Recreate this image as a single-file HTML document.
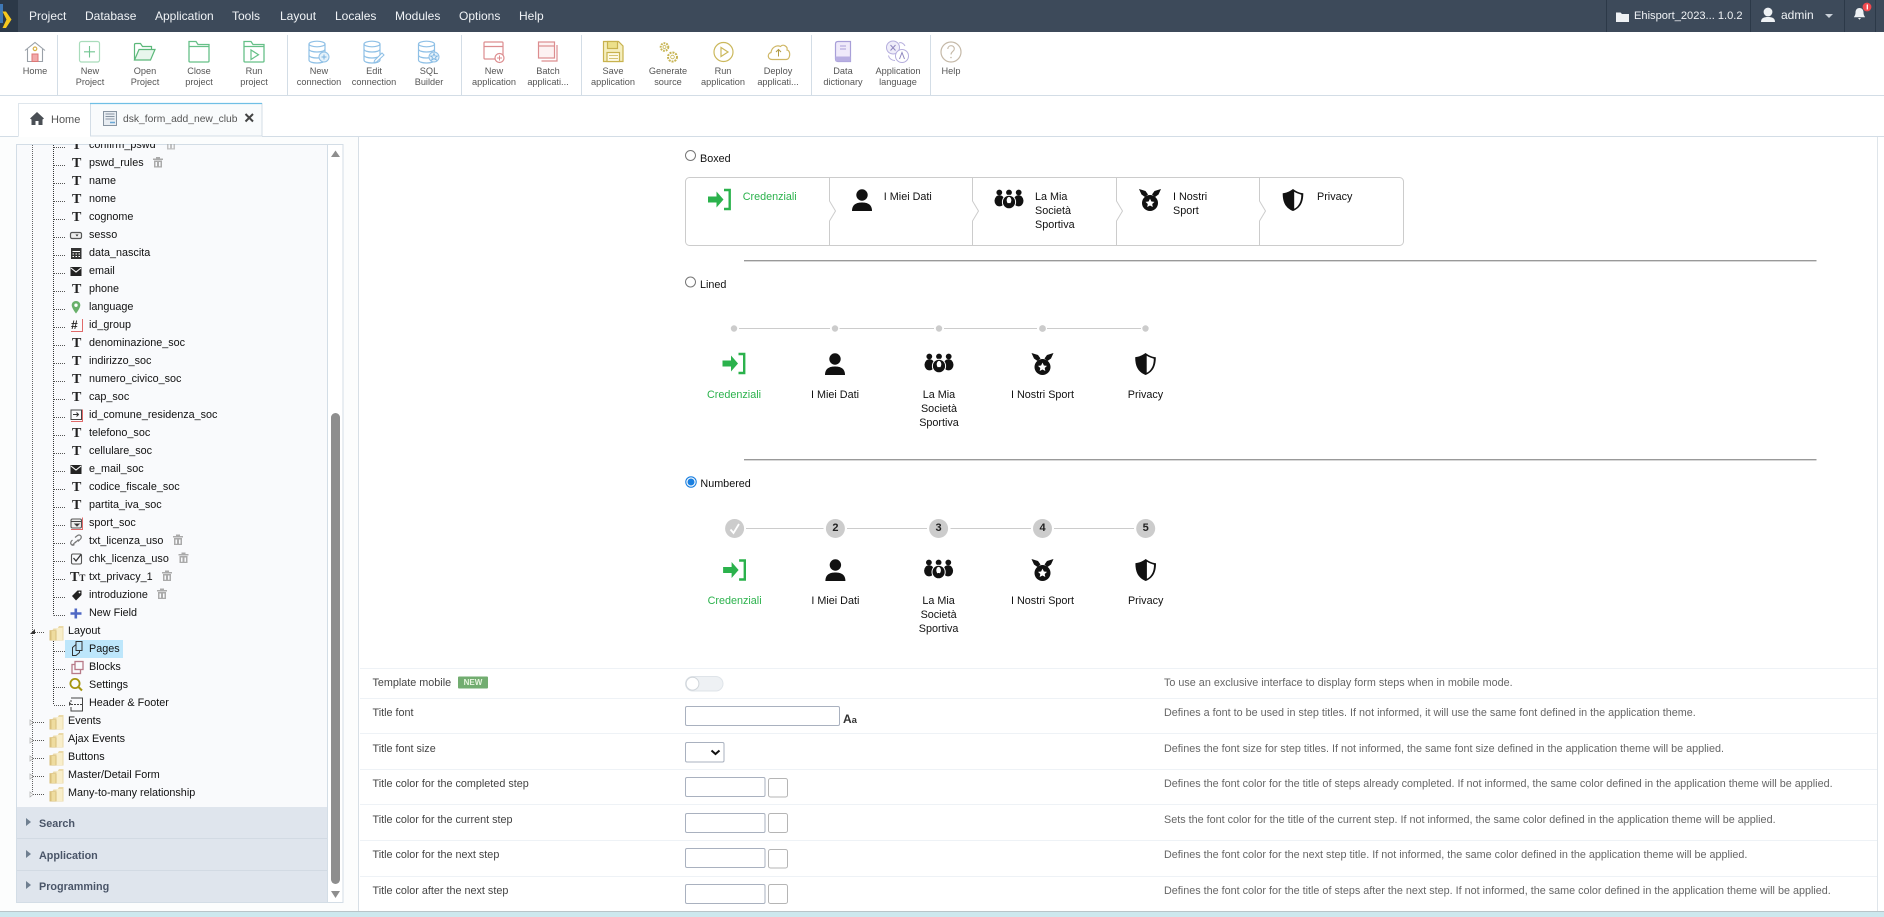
<!DOCTYPE html>
<html><head><meta charset="utf-8"><title>Scriptcase</title>
<style>
html,body{margin:0;padding:0;background:#fff;width:1884px;height:917px;overflow:hidden}
body{position:relative;font-family:"Liberation Sans",sans-serif}
#g{position:absolute;left:0;top:0}
.t,.m,.b,.r,.l,.f,.d,.c,.s{position:absolute;white-space:nowrap}
.m{top:9px;font-size:12px;line-height:14px;color:#f0f3f6}
.b{top:66px;width:70px;text-align:center;font-size:9.2px;line-height:11.4px;color:#555}
.r{left:89px;font-size:10.8px;line-height:14px;color:#111}
.f{left:68px;font-size:10.8px;line-height:14px;color:#111}
.l{left:372.5px;font-size:10.8px;line-height:14px;color:#444}
.d{left:1164px;font-size:10.8px;line-height:14px;color:#666}
.s{font-size:10.8px;line-height:14px;color:#111}
.c{width:90px;text-align:center;font-size:10.8px;line-height:14px;color:#111}
.gr{color:#2bb24c}
.acc{position:absolute;left:39px;font-size:10.8px;line-height:14px;font-weight:bold;color:#4a5568}
.T{position:absolute;left:72px;font:bold 14px/14px "Liberation Serif",serif;color:#222}
.n{position:absolute;top:521px;width:20px;text-align:center;font:bold 11px/14px "Liberation Sans",sans-serif;color:#222}
</style></head><body>
<div style="position:absolute;left:0;top:0;width:1884px;height:32px;background:#3d4a5a"></div>
<div style="position:absolute;left:0;top:0;width:18px;height:32px;background:#2c3948"></div>
<div style="position:absolute;left:0;top:137px;width:358px;height:775px;background:#fcfdfd"></div>
<div style="position:absolute;left:16px;top:144px;width:312px;height:758px;background:#f9fafc"></div>
<div style="position:absolute;left:65px;top:640px;width:58px;height:18px;background:#bde6fb"></div>
<div style="position:absolute;left:16px;top:807px;width:312px;height:95px;background:#dfe5ed"></div>
<div style="position:absolute;left:0;top:912px;width:1884px;height:5px;background:#cde8ee"></div>

<svg id="g" width="1884" height="917" viewBox="0 0 1884 917" xmlns="http://www.w3.org/2000/svg">
<defs>
<g id="login"><path d="M-11.5-3H-3V-8L4 0-3 8V3H-11.5Z" fill="#2bb24c"/><path d="M4.5-9.5H10.2V9.5H4.5" fill="none" stroke="#2bb24c" stroke-width="2.4"/></g>
<g id="person" fill="#111"><circle cy="-5" r="5.7"/><path d="M-10 11C-10 4-5 2.5 0 2.5S10 4 10 11Z"/></g>
<g id="group" fill="#111"><circle cx="-9.7" cy="-7.5" r="2.9"/><circle cy="-7.5" r="2.9"/><circle cx="9.7" cy="-7.5" r="2.9"/><ellipse cx="-9.5" cy="0.8" rx="5" ry="5.6"/><ellipse cx="9.5" cy="0.8" rx="5" ry="5.6"/><ellipse cy="2" rx="6.6" ry="6.8" stroke="#fff" stroke-width="1"/><ellipse cy="0.3" rx="2.3" ry="3.4" fill="#fff"/><path d="M-0.8 3H0.8V7H-0.8Z"/></g>
<g id="medal"><path d="M-11-11L-4.5-9-2-5.5-5-3-8.5-5.5ZM11-11L4.5-9 2-5.5 5-3 8.5-5.5Z" fill="#111"/><circle cy="3" r="8" fill="#111"/><path d="M0-1.4L1.4 1.5 4.5 1.9 2.2 4 2.8 7 0 5.5-2.8 7-2.2 4-4.5 1.9-1.4 1.5Z" fill="#fff"/></g>
<g id="shield"><path d="M0-11C4-8 7.5-7 10.3-6.8 10.3 3 7 8 0 11-7 8-10.3 3-10.3-6.8-7.5-7-4-8 0-11Z" fill="#111"/><path d="M1.2-8.2C3.5-6.8 6-5.8 8.3-5.3 8.3 2 5.5 6.5 1.2 8.8Z" fill="#fff"/></g>
<g id="trash" fill="#aaa"><rect x="0" y="1.5" width="10" height="1.5"/><rect x="3" y="0" width="4" height="1.6"/><path d="M1 3.5H9V10.5H1ZM2.5 5V9.2H4V5ZM6 5V9.2H7.5V5Z" fill-rule="evenodd"/></g>
<g id="folder"><path d="M1 5H4L5 3.5H9L10.5 1H15V15.5H1Z" fill="#ead9a8"/><path d="M8 3H14V15H8Z" fill="#f8eecb"/><path d="M1 5.5H8V15.5H1Z" fill="#d9c07c"/><path d="M3 6H7V15H3Z" fill="#eedc9f"/></g>
<g id="db" fill="none" stroke-width="1.2"><ellipse cx="0" cy="-8" rx="8" ry="2.8"/><path d="M-8-8V8C-8 10-4 11 0 11S8 10 8 8V-8M-8-3C-8-1-4 0 0 0S8-1 8-3M-8 3C-8 5-4 6 0 6S8 5 8 3"/></g>
<g id="fld" fill="none"><path d="M-10-10H-3L-1-7H10V9.5Q10 10.5 9 10.5H-9Q-10 10.5-10 9.5Z"/><path d="M-10-5H10"/></g>
</defs>

<!-- logo -->
<path d="M0 4H3V23H0Z" fill="#3f78b5"/>
<path d="M2.5 11.5L6 11.5 11.5 19.5 6 28 2.5 28 6.5 19.5Z" fill="#f6c81e"/>

<!-- topbar right -->
<g stroke="#2c3948" stroke-width="1"><path d="M1606.5 0V32M1750.5 0V32M1844.5 0V32M1875.5 0V32"/></g>
<path d="M1616 12.5h4.5l1.5 1.5h7v8h-13Z" fill="#eef1f4"/>
<g fill="#eef1f4"><circle cx="1768" cy="12" r="4.4"/><path d="M1761 22c0-4 3-5 7-5s7 1 7 5Z"/><path d="M1825 14h8l-4 4Z" fill="#c9d0d8"/><path d="M1859.5 8c2.7 0 4 2 4 4.5 0 2.5 1 3.5 1.6 4.7h-11.2c.6-1.2 1.6-2.2 1.6-4.7 0-2.5 1.3-4.5 4-4.5ZM1858 18h3l-1.5 1.8Z"/></g>
<circle cx="1867" cy="7" r="4.4" fill="#f0484e"/><path d="M1867.3 4.5V9.5" stroke="#fff" stroke-width="1.3"/>

<!-- toolbar -->
<path d="M0 95.5H1884M0 136.5H18.5M262 136.5H1884" stroke="#d3dde6"/>
<path d="M57.5 35V95M287.5 35V95M461.5 35V95M581.5 35V95M811.5 35V95M930.5 35V95" stroke="#d3dde6"/>
<!-- home -->
<g fill="none" stroke="#9aa1a8" stroke-width="1.1"><path d="M25 50.5L35 42.5 45 50.5"/><path d="M27.5 49V61.5H42.5V49"/></g><rect x="32" y="54" width="6" height="7.5" fill="#f2a9a9" stroke="#d77"/><circle cx="35" cy="48.8" r="1.8" fill="none" stroke="#d8b24a" stroke-width="1.2"/>
<!-- new project -->
<rect x="79.5" y="41.5" width="20" height="20.5" rx="2" fill="none" stroke="#a9dcbb" stroke-width="1.2"/><path d="M89.5 46V57.5M84 51.8H95" stroke="#72c592" stroke-width="1.1"/>
<!-- open -->
<g fill="none" stroke="#5cb87a" stroke-width="1.2"><path d="M134.5 60V44.5Q134.5 43.5 136 43.5H140.5L142.5 46.5H151.5V49.5"/><path d="M134.5 60H150.5L155 49.5H139Z" fill="#e8f6ed"/></g>
<!-- close -->
<use href="#fld" x="199" y="51.5" stroke="#66c088" stroke-width="1.3"/>
<use href="#fld" x="254" y="51.5" stroke="#66c088" stroke-width="1.3"/><path d="M251 50V59.5L258.5 54.7Z" fill="none" stroke="#66c088" stroke-width="1.2"/>
<!-- dbs -->
<use href="#db" x="317" y="52" stroke="#8fc0e6"/><circle cx="324" cy="57" r="5" fill="#e4f1fa" stroke="#8fc0e6"/><path d="M324 54.5V59.5M321.5 57H326.5" stroke="#7ab3e0"/>
<use href="#db" x="372" y="52" stroke="#8fc0e6"/><path d="M374.5 60.5L382 53 384 55 376.5 62 374 62.5Z" fill="#fff" stroke="#8fc0e6"/>
<use href="#db" x="426.5" y="52" stroke="#8fc0e6"/><circle cx="434" cy="57" r="5" fill="#e4f1fa" stroke="#8fc0e6"/><path d="M434 53.5L435 56H437.5L435.5 57.5 436.3 60 434 58.5 431.7 60 432.5 57.5 430.5 56H433Z" fill="none" stroke="#7ab3e0" stroke-width=".8"/>
<!-- applications -->
<g fill="none" stroke="#dc8d8f" stroke-width="1.2"><rect x="484" y="42" width="19" height="17" rx="1"/><path d="M484 46.5H503"/><circle cx="499.5" cy="58" r="4.5" fill="#fff"/><path d="M499.5 55.5V60.5M497 58H502" stroke-width="1"/>
<rect x="538.5" y="42" width="16" height="16" fill="#fdf2f2"/><path d="M538.5 46H554.5"/><path d="M557 45V61H541.5"/></g>
<!-- save -->
<g fill="none" stroke="#c8b24e" stroke-width="1.2"><path d="M603.5 41.5H618.5L623 46V61.5H603.5Z" fill="#f5eebd"/><rect x="607.5" y="41.5" width="10" height="7" fill="#ece08a"/><rect x="607" y="52.5" width="12.5" height="9" fill="#fdfae6"/><path d="M609 55.5H618M609 58.5H618" stroke-width=".8"/></g>
<!-- gears -->
<g fill="none" stroke="#c7b453"><circle cx="664.5" cy="47" r="3.8" stroke-width="2" stroke-dasharray="1.8 1"/><circle cx="664.5" cy="47" r="1.5" stroke-width=".8"/><circle cx="672.5" cy="57" r="4.5" stroke-width="2" stroke-dasharray="2 1"/><circle cx="672.5" cy="57" r="1.8" stroke-width=".8"/></g>
<!-- run app -->
<circle cx="723.5" cy="52" r="9.5" fill="none" stroke="#cbb85c" stroke-width="1.2"/><path d="M721 47.5V56.5L728 52Z" fill="none" stroke="#cbb85c" stroke-width="1.2"/>
<!-- deploy -->
<path d="M772 59.5C767.5 59.5 767 53.5 771 52.5 771.5 48 776 44.5 780.5 46.5 783 43.5 788 46.5 787 50 791 50.5 790.5 59.5 786 59.5Z" fill="none" stroke="#cfb765" stroke-width="1.2"/><path d="M778.5 56.5V49.5M776 52L778.5 49.5 781 52" fill="none" stroke="#b19a44"/>
<!-- data dictionary -->
<path d="M835.5 44Q835.5 41.5 838 41.5H850.5V61.5H838Q835.5 61.5 835.5 59Z" fill="#efeafa" stroke="#a89fd8" stroke-width="1.2"/><rect x="835.5" y="56.5" width="15" height="5" fill="#b8afe2"/><path d="M840 46H846M840 49H846" stroke="#a89fd8"/>
<!-- language -->
<g fill="none" stroke="#b5aedd"><circle cx="893" cy="47.5" r="6.5" fill="#efedf9"/><circle cx="902" cy="56" r="6.5" fill="#fff"/><path d="M899 43C901 42 904 43.5 905 46M888.5 55.5C889 58.5 892 60.5 895 60.5"/></g><path d="M890.5 45L895.5 50.5M895.5 45L890.5 50.5M899.5 59L902 52.5 904.5 59" fill="none" stroke="#8f87bf"/>
<!-- help -->
<circle cx="951" cy="52" r="10" fill="none" stroke="#c5b9a8" stroke-width="1.2"/><path d="M947.8 49C948 44.5 954.5 44.7 954.3 49 954.2 51.5 951 51.5 951 54.5" fill="none" stroke="#c5b9a8" stroke-width="1.1"/><circle cx="951" cy="57.5" r=".8" fill="#c5b9a8"/>

<!-- tabs -->
<path d="M18.5 136V103.5H90" fill="none" stroke="#dfe6ec"/>
<rect x="90.5" y="103.5" width="171.5" height="32.5" fill="#f9fbfc" stroke="#d3dde6"/><path d="M90 103.5H262" stroke="#6fbfe5" stroke-width="1.2"/>
<path d="M30 118.5L37 112 44 118.5 42.5 119.5V125H38.5V121H35.5V125H31.5V119.5Z" fill="#4a4f55"/>
<rect x="103.5" y="111.5" width="13" height="14" fill="#e8edf2" stroke="#8794a1"/><path d="M105.5 114H114.5M105.5 116.5H114.5M105.5 119H114.5" stroke="#8794a1"/><path d="M110 122.5H115" stroke="#6aa8d6" stroke-width="1.5"/>
<path d="M245.5 114L253 121.5M253 114L245.5 121.5" stroke="#444" stroke-width="2"/>

<!-- left panel borders -->
<path d="M358.5 137V912" stroke="#d7dfe6"/>
<rect x="16.5" y="144.5" width="326.5" height="758" fill="none" stroke="#d3dde6"/>
<path d="M327.5 145V902" stroke="#d3dde6"/>
<path d="M1877.5 137V912" stroke="#dfe5ea"/>
<path d="M0 911.5H1884" stroke="#b9c4c8"/>
<!-- scrollbar -->
<rect x="328" y="145" width="14.5" height="757" fill="#fff"/>
<rect x="331" y="413" width="9" height="471" rx="4.5" fill="#8e8e8e"/>
<path d="M331 157H340L335.5 150.5ZM331 891H340L335.5 898Z" fill="#8e8e8e"/>
<!-- tree lines -->
<g stroke="#333" stroke-width="1" stroke-dasharray="1 1"><path d="M32.5 145V793" opacity=".75"/><path d="M53.5 145V615.5M53.5 633V705"/></g>
<g stroke="#555" stroke-dasharray="1 1"><path d="M54 147.5H66M54 165.5H66M54 183.5H66M54 201.5H66M54 219.5H66M54 237.5H66M54 255.5H66M54 273.5H66M54 291.5H66M54 309.5H66M54 327.5H66M54 345.5H66M54 363.5H66M54 381.5H66M54 399.5H66M54 417.5H66M54 435.5H66M54 453.5H66M54 471.5H66M54 489.5H66M54 507.5H66M54 525.5H66M54 543.5H66M54 561.5H66M54 579.5H66M54 597.5H66M54 615.5H66M54 651.5H66M54 669.5H66M54 687.5H66M54 705.5H66M33 632.5H44M33 722.5H44M33 740.5H44M33 758.5H44M33 776.5H44M33 794.5H44"/></g>
<path d="M30 634L35 634 35 629Z" fill="#333"/>
<g fill="#fff" stroke="#aaa" stroke-width=".7"><path d="M30 720V725L33 722.5ZM30 738V743L33 740.5ZM30 756V761L33 758.5ZM30 774V779L33 776.5ZM30 792V797L33 794.5Z"/></g>
<!-- folders -->
<use href="#folder" x="48.5" y="625"/><use href="#folder" x="48.5" y="714"/><use href="#folder" x="48.5" y="732"/><use href="#folder" x="48.5" y="750"/><use href="#folder" x="48.5" y="768"/><use href="#folder" x="48.5" y="786"/>
<!-- field icons -->
<use href="#trash" x="166" y="139" opacity=".7"/>
<use href="#trash" x="153" y="157"/><use href="#trash" x="173" y="534.5"/><use href="#trash" x="178.5" y="552.5"/><use href="#trash" x="162" y="570.5"/><use href="#trash" x="157" y="588.5"/>
<rect x="70.5" y="232.5" width="11" height="6" rx="1.5" fill="#eee" stroke="#555" stroke-width="1.2"/><path d="M75.5 234.5L77 236.5 78.5 234.5Z" fill="#333"/>
<path d="M71 248H81.5V259H71Z" fill="#333"/><path d="M72.5 251.5H80M72.5 254H74M75.5 254H77M78.5 254H80M72.5 256.5H74M75.5 256.5H77M78.5 256.5H80" stroke="#fff"/>
<path d="M70.5 267H81.5V276H70.5Z" fill="#222"/><path d="M71 268L76 272 81 268" fill="none" stroke="#fff" stroke-width="1.1"/>
<path d="M76 301C73 301 71.7 303.3 71.7 305.2 71.7 308 76 313.5 76 313.5S80.3 308 80.3 305.2C80.3 303.3 79 301 76 301Z" fill="#68b06a"/><circle cx="76" cy="305.2" r="1.7" fill="#fff"/>
<path d="M71 331.5H82.5V319" fill="none" stroke="#e06a6a"/>
<rect x="71" y="410" width="10.5" height="9.5" fill="none" stroke="#444"/><path d="M73 414.5H78M76.5 412.5L78.5 414.5 76.5 416.5" fill="none" stroke="#333"/><path d="M71 421.5H82.5V409.5" fill="none" stroke="#e06a6a"/>
<path d="M70.5 465H81.5V474H70.5Z" fill="#222"/><path d="M71 466L76 470 81 466" fill="none" stroke="#fff" stroke-width="1.1"/>
<rect x="71" y="519" width="10.5" height="9" rx="1.5" fill="#eee" stroke="#555" stroke-width="1.1"/><path d="M71 521.5H81.5M75 524L77 526 79 524Z" stroke="#444"/><path d="M71 529.5H82.5V517.5" fill="none" stroke="#e06a6a"/>
<g fill="none" stroke="#777" stroke-width="1.2"><path d="M72.5 545L76 541.5M75 537.5L77.5 535.5C80 534 82.5 536.5 80.5 539L78 541.5M78.5 539.5L75 543M72.5 540L71.5 541C69.5 543.5 72 546.5 74.5 544.5"/></g>
<rect x="71.5" y="554" width="10" height="10" rx="1.5" fill="none" stroke="#555" stroke-width="1.1"/><path d="M73.5 558L76 561 81 554.5" fill="none" stroke="#333" stroke-width="1.3"/>
<path d="M72 596L77.5 590.5H81.5V595L76 600.5Z" fill="#222"/><circle cx="79.5" cy="592.5" r=".9" fill="#fff"/>
<path d="M75.8 608.5V618.5M70.5 613.5H81.5" stroke="#4f68c4" stroke-width="2.6"/>
<g fill="none" stroke="#333" stroke-width="1"><path d="M72.5 647.5L76 644.5H79.5V652.5L76 655.5H72.5Z"/><rect x="76" y="641.5" width="6" height="9" fill="#bde6fb"/></g>
<g fill="none" stroke="#b77a88" stroke-width="1.3"><rect x="72" y="664.5" width="8.5" height="9"/><rect x="75" y="661.5" width="8" height="8" fill="#f9fafc"/></g>
<circle cx="75" cy="683.5" r="4.6" fill="none" stroke="#a5950f" stroke-width="1.8"/><path d="M78.5 687L82 690.5" stroke="#a5950f" stroke-width="2"/>
<g fill="none" stroke="#444"><path d="M71 698H82.5V711H71V707M71 700V702"/><path d="M71 704.5H82.5" stroke-dasharray="2 1"/></g><path d="M69 701.5V706L71.5 704Z" fill="#444"/>
<!-- accordion -->
<path d="M17 838.5H327M17 870.5H327" stroke="#d2dae3"/>
<path d="M26 818V826L31 822ZM26 850V858L31 854ZM26 881V889L31 885Z" fill="#6f7f90"/>

<!-- radios -->
<circle cx="690.5" cy="155.5" r="5" fill="#fff" stroke="#777"/>
<circle cx="690.5" cy="282" r="5" fill="#fff" stroke="#777"/>
<circle cx="691" cy="482" r="5.2" fill="#fff" stroke="#1a7fe0" stroke-width="1.1"/><circle cx="691" cy="482" r="3.5" fill="#1a7fe0"/>

<!-- boxed -->
<rect x="685.5" y="177.5" width="718" height="68" rx="4" fill="none" stroke="#ccc"/>
<path d="M829.5 178V201L835.5 211 829.5 221V245M972.5 178V201L978.5 211 972.5 221V245M1116.5 178V201L1122.5 211 1116.5 221V245M1259.5 178V201L1265.5 211 1259.5 221V245" fill="none" stroke="#ccc"/>
<use href="#login" x="719.5" y="199.5"/><use href="#person" x="862" y="200"/><use href="#group" x="1009" y="200"/><use href="#medal" x="1150" y="200"/><use href="#shield" x="1293" y="200"/>
<!-- hr -->
<path d="M744 260.7H1816.5M744 459.7H1816.5" stroke="#999" stroke-width="1.3"/>
<!-- lined -->
<path d="M739 328.5H830M839.5 328.5H934M944 328.5H1037M1047 328.5H1141" stroke="#ccc"/>
<g fill="#ccc"><circle cx="734" cy="328.5" r="3.2"/><circle cx="835" cy="328.5" r="3.2"/><circle cx="939" cy="328.5" r="3.2"/><circle cx="1042.5" cy="328.5" r="3.4"/><circle cx="1145.5" cy="328.5" r="3.2"/></g>
<use href="#login" x="734" y="363.5"/><use href="#person" x="835" y="364"/><use href="#group" x="939" y="364"/><use href="#medal" x="1042.5" y="364"/><use href="#shield" x="1145.5" y="364"/>
<!-- numbered -->
<path d="M746 528.5H823.5M847 528.5H927M950.5 528.5H1031M1054 528.5H1134" stroke="#ccc"/>
<g fill="#ccc"><circle cx="734.6" cy="528.5" r="9.5"/><circle cx="835.4" cy="528.5" r="9.5"/><circle cx="938.6" cy="528.5" r="9.5"/><circle cx="1042.5" cy="528.5" r="9.5"/><circle cx="1145.7" cy="528.5" r="9.5"/></g>
<path d="M730.5 529.5L733.5 533 739 524" fill="none" stroke="#fff" stroke-width="1.8"/>
<use href="#login" x="734.6" y="570"/><use href="#person" x="835.4" y="570"/><use href="#group" x="938.6" y="570"/><use href="#medal" x="1042.5" y="570"/><use href="#shield" x="1145.7" y="570"/>

<!-- rows -->
<path d="M360 668.5H1877M360 698.5H1877M360 733.5H1877M360 769.5H1877M360 804.5H1877M360 840.5H1877M360 876.5H1877" stroke="#eef2f6"/>
<rect x="458" y="676.5" width="30" height="12" rx="1" fill="#72ad70"/>
<rect x="685.5" y="676.5" width="37.5" height="14.5" rx="7.2" fill="#eef1f4" stroke="#dfe4e9"/><circle cx="692.5" cy="683.7" r="6.4" fill="#fff" stroke="#d0d5da"/>
<g fill="#fff" stroke="#a9b1bf"><rect x="685.5" y="706.5" width="154" height="19" rx="1.5"/><rect x="685.5" y="742.5" width="38.5" height="19.5" rx="1.5"/>
<rect x="685.5" y="777.5" width="79.5" height="19" rx="1.5"/><rect x="685.5" y="813.5" width="79.5" height="19" rx="1.5"/><rect x="685.5" y="848.5" width="79.5" height="19" rx="1.5"/><rect x="685.5" y="884.5" width="79.5" height="19" rx="1.5"/>
<g stroke="#b5b5b5"><rect x="768.5" y="778.5" width="19" height="18.5" rx="2"/><rect x="768.5" y="813.5" width="19" height="19" rx="2"/><rect x="768.5" y="849.5" width="19" height="18.5" rx="2"/><rect x="768.5" y="884.5" width="19" height="19" rx="2"/></g></g>
<path d="M711.5 750.5L715.5 754 719.5 750.5" fill="none" stroke="#111" stroke-width="2"/>
</svg>

<div class="m" style="left:29px">Project</div><div class="m" style="left:85px">Database</div><div class="m" style="left:155px">Application</div><div class="m" style="left:232px">Tools</div><div class="m" style="left:280px">Layout</div><div class="m" style="left:335px">Locales</div><div class="m" style="left:395px">Modules</div><div class="m" style="left:459px">Options</div><div class="m" style="left:519px">Help</div>
<div class="m" style="left:1634px;font-size:11.1px">Ehisport_2023... 1.0.2</div><div class="m" style="left:1781px;top:8px">admin</div>

<div class="b" style="left:0">Home</div>
<div class="b" style="left:55px">New<br>Project</div><div class="b" style="left:110px">Open<br>Project</div><div class="b" style="left:164px">Close<br>project</div><div class="b" style="left:219px">Run<br>project</div>
<div class="b" style="left:284px">New<br>connection</div><div class="b" style="left:339px">Edit<br>connection</div><div class="b" style="left:394px">SQL<br>Builder</div>
<div class="b" style="left:459px">New<br>application</div><div class="b" style="left:513px">Batch<br>applicati...</div>
<div class="b" style="left:578px">Save<br>application</div><div class="b" style="left:633px">Generate<br>source</div><div class="b" style="left:688px">Run<br>application</div><div class="b" style="left:743px">Deploy<br>applicati...</div>
<div class="b" style="left:808px">Data<br>dictionary</div><div class="b" style="left:863px">Application<br>language</div><div class="b" style="left:916px">Help</div>

<div class="t" style="left:51px;top:113px;font-size:11px;line-height:14px;color:#555">Home</div>
<div class="t" style="left:123px;top:113px;font-size:10.3px;line-height:14px;color:#555">dsk_form_add_new_club</div>

<div class="r" style="top:138px">confirm_pswd</div><div class="r" style="top:156px">pswd_rules</div><div class="r" style="top:174px">name</div><div class="r" style="top:192px">nome</div><div class="r" style="top:210px">cognome</div><div class="r" style="top:228px">sesso</div><div class="r" style="top:246px">data_nascita</div><div class="r" style="top:264px">email</div><div class="r" style="top:282px">phone</div><div class="r" style="top:300px">language</div><div class="r" style="top:318px">id_group</div><div class="r" style="top:336px">denominazione_soc</div><div class="r" style="top:354px">indirizzo_soc</div><div class="r" style="top:372px">numero_civico_soc</div><div class="r" style="top:390px">cap_soc</div><div class="r" style="top:408px">id_comune_residenza_soc</div><div class="r" style="top:426px">telefono_soc</div><div class="r" style="top:444px">cellulare_soc</div><div class="r" style="top:462px">e_mail_soc</div><div class="r" style="top:480px">codice_fiscale_soc</div><div class="r" style="top:498px">partita_iva_soc</div><div class="r" style="top:516px">sport_soc</div><div class="r" style="top:534px">txt_licenza_uso</div><div class="r" style="top:552px">chk_licenza_uso</div><div class="r" style="top:570px">txt_privacy_1</div><div class="r" style="top:588px">introduzione</div><div class="r" style="top:606px">New Field</div>
<div class="f" style="top:624px">Layout</div><div class="r" style="top:642px">Pages</div><div class="r" style="top:660px">Blocks</div><div class="r" style="top:678px">Settings</div><div class="r" style="top:696px">Header &amp; Footer</div>
<div class="f" style="top:714px">Events</div><div class="f" style="top:732px">Ajax Events</div><div class="f" style="top:750px">Buttons</div><div class="f" style="top:768px">Master/Detail Form</div><div class="f" style="top:786px">Many-to-many relationship</div>

<div class="T" style="top:139px">T</div><div class="T" style="top:157px">T</div><div class="T" style="top:175px">T</div><div class="T" style="top:193px">T</div><div class="T" style="top:211px">T</div><div class="T" style="top:283px">T</div><div class="T" style="top:337px">T</div><div class="T" style="top:355px">T</div><div class="T" style="top:373px">T</div><div class="T" style="top:391px">T</div><div class="T" style="top:427px">T</div><div class="T" style="top:445px">T</div><div class="T" style="top:481px">T</div><div class="T" style="top:499px">T</div><div class="T" style="left:70px;top:571px">T<span style="font-size:9px">T</span></div><div class="t" style="left:71px;top:318px;font:bold 12px/14px 'Liberation Sans',sans-serif;color:#222">#</div>

<div style="position:absolute;left:17px;top:137px;width:326px;height:7px;background:#fcfdfd"></div>

<div class="acc" style="top:817px">Search</div><div class="acc" style="top:849px">Application</div><div class="acc" style="top:880px">Programming</div>

<div class="s" style="left:700px;top:152px">Boxed</div>
<div class="s gr" style="left:742.7px;top:190px">Credenziali</div>
<div class="s" style="left:883.8px;top:190px">I Miei Dati</div>
<div class="s" style="left:1035px;top:190px">La Mia<br>Società<br>Sportiva</div>
<div class="s" style="left:1173px;top:190px">I Nostri<br>Sport</div>
<div class="s" style="left:1317px;top:190px">Privacy</div>

<div class="s" style="left:700px;top:278px">Lined</div>
<div class="c gr" style="left:689px;top:388px">Credenziali</div><div class="c" style="left:790px;top:388px">I Miei Dati</div><div class="c" style="left:894px;top:388px">La Mia<br>Società<br>Sportiva</div><div class="c" style="left:997.5px;top:388px">I Nostri Sport</div><div class="c" style="left:1100.5px;top:388px">Privacy</div>

<div class="s" style="left:700.4px;top:477px">Numbered</div>
<div class="c gr" style="left:689.6px;top:594px">Credenziali</div><div class="c" style="left:790.4px;top:594px">I Miei Dati</div><div class="c" style="left:893.6px;top:594px">La Mia<br>Società<br>Sportiva</div><div class="c" style="left:997.5px;top:594px">I Nostri Sport</div><div class="c" style="left:1100.7px;top:594px">Privacy</div>
<div class="n" style="left:825.4px">2</div><div class="n" style="left:928.6px">3</div><div class="n" style="left:1032.5px">4</div><div class="n" style="left:1135.7px">5</div>

<div class="l" style="top:676px">Template mobile</div><div class="l" style="top:706px">Title font</div><div class="l" style="top:742px">Title font size</div><div class="l" style="top:777px">Title color for the completed step</div><div class="l" style="top:813px">Title color for the current step</div><div class="l" style="top:848px">Title color for the next step</div><div class="l" style="top:884px">Title color after the next step</div>
<div class="t" style="left:458px;top:675.5px;width:30px;text-align:center;font:bold 8px/13px 'Liberation Sans',sans-serif;color:#e8f5e0">NEW</div>
<div class="t" style="left:843px;top:712px;font:bold 12px/14px 'Liberation Sans',sans-serif;color:#333">A<span style="font-size:9.5px">a</span></div>

<div class="d" style="top:676px">To use an exclusive interface to display form steps when in mobile mode.</div>
<div class="d" style="top:706px">Defines a font to be used in step titles. If not informed, it will use the same font defined in the application theme.</div>
<div class="d" style="top:742px">Defines the font size for step titles. If not informed, the same font size defined in the application theme will be applied.</div>
<div class="d" style="top:777px">Defines the font color for the title of steps already completed. If not informed, the same color defined in the application theme will be applied.</div>
<div class="d" style="top:813px">Sets the font color for the title of the current step. If not informed, the same color defined in the application theme will be applied.</div>
<div class="d" style="top:848px">Defines the font color for the next step title. If not informed, the same color defined in the application theme will be applied.</div>
<div class="d" style="top:884px">Defines the font color for the title of steps after the next step. If not informed, the same color defined in the application theme will be applied.</div>
</body></html>
